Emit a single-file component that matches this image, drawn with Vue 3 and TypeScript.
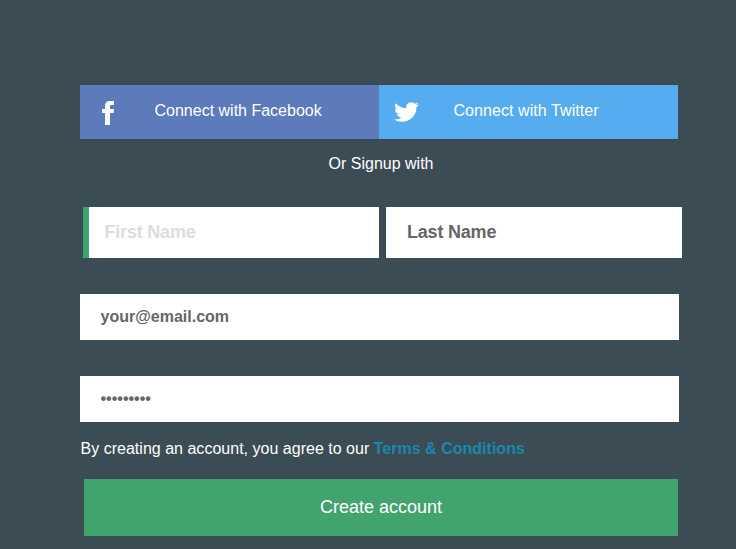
<script setup lang="ts">
import { reactive } from 'vue'

interface SignupForm {
  firstName: string
  lastName: string
  email: string
  password: string
}

const form = reactive<SignupForm>({
  firstName: '',
  lastName: '',
  email: '',
  password: '',
})
</script>

<template>
  <main class="signup">
    <div class="social">
      <button class="social-button facebook" type="button">
        <svg class="facebook-icon" viewBox="0 0 12 24" aria-hidden="true">
          <path d="M3 24V12H0V8h3V5C3 1.600 4.700 0 7.800 0H12v4H9.500C8.300 4 8 4.500 8 5.500V8h4l-.4 4H8v12z" />
        </svg>
        <span>Connect with Facebook</span>
      </button>
      <button class="social-button twitter" type="button">
        <svg class="twitter-icon" viewBox="0 2 24 20" preserveAspectRatio="none" aria-hidden="true">
          <path d="M23.953 4.570a10 10 0 0 1-2.825.775 4.958 4.958 0 0 0 2.163-2.723c-.951.555-2.005.959-3.127 1.184a4.920 4.920 0 0 0-8.384 4.482C7.690 8.095 4.067 6.130 1.640 3.162a4.822 4.822 0 0 0-.666 2.475c0 1.710.870 3.213 2.188 4.096a4.904 4.904 0 0 1-2.228-.616v.060a4.923 4.923 0 0 0 3.946 4.827 4.996 4.996 0 0 1-2.212.085 4.936 4.936 0 0 0 4.604 3.417 9.867 9.867 0 0 1-6.102 2.105c-.390 0-.779-.023-1.170-.067a13.995 13.995 0 0 0 7.557 2.209c9.053 0 13.998-7.496 13.998-13.985 0-.210 0-.420-.015-.630a9.935 9.935 0 0 0 2.460-2.548z" />
        </svg>
        <span>Connect with Twitter</span>
      </button>
    </div>

    <p class="divider">Or Signup with</p>

    <form @submit.prevent>
      <div class="names">
        <input v-model="form.firstName" class="field name active" type="text" placeholder="First Name" />
        <input v-model="form.lastName" class="field name" type="text" placeholder="Last Name" />
      </div>
      <input v-model="form.email" class="field wide" type="text" placeholder="your@email.com" />
      <input v-model="form.password" class="field wide" type="password" placeholder="•••••••••" />
      <p class="terms">By creating an account, you agree to our <a href="#">Terms &amp; Conditions</a></p>
      <button class="submit" type="submit">Create account</button>
    </form>
  </main>
</template>

<style>
body {
  background: #3c4c54;
}
</style>

<style scoped>
.signup {
  box-sizing: border-box;
  height: 549px;
  padding: 85px 54px 0 80px;
  overflow: hidden;
  font: 16px/20px "Liberation Sans", Arial, sans-serif;
  color: #fff;
}

button,
input {
  box-sizing: border-box;
  margin: 0;
  border: 0;
  border-radius: 0;
  font-family: inherit;
}

.social {
  display: flex;
  width: 598px;
}

.social-button {
  display: flex;
  align-items: flex-start;
  width: 299px;
  height: 54px;
  padding: 16px 0 0;
  font-size: 16px;
  line-height: 20px;
  color: #fff;
}

.facebook {
  background: #5d7aba;
}

.twitter {
  background: #55acee;
  letter-spacing: 0.07px;
}

.social-button svg {
  flex: none;
  fill: #fff;
}

.facebook-icon {
  width: 12px;
  height: 24px;
  margin: 0 40.5px 0 22px;
}

.twitter-icon {
  width: 25px;
  height: 20px;
  margin: 1px 34.5px 0 15px;
}

.divider {
  width: 602px;
  margin: 15px 0 33px;
  text-align: center;
}

form {
  display: flex;
  flex-direction: column;
  align-items: flex-start;
}

.names {
  display: flex;
  gap: 7px;
  margin: 0 0 36px 3px;
}

.field {
  padding: 0 20px;
  background: #fff;
  font-weight: bold;
  color: #666;
  outline: none;
}

.field::placeholder {
  color: #666;
  opacity: 1;
}

.name {
  width: 296px;
  height: 51px;
  padding: 0 21px;
  font-size: 18px;
  letter-spacing: -0.2px;
}

.active {
  padding-left: 15.5px;
  border-left: 6px solid #41a46f;
}

.active::placeholder {
  color: #ddd;
}

.wide {
  width: 599px;
  height: 46px;
  margin-bottom: 36px;
  padding-left: 20.5px;
  font-size: 16px;
}

.terms {
  margin: -19px 0 20px;
  padding-left: 0.5px;
  letter-spacing: 0.015px;
}

.terms a {
  font-weight: bold;
  color: #1b87ab;
  text-decoration: none;
}

.submit {
  width: 594px;
  height: 57px;
  margin-left: 4px;
  padding: 0;
  background: #41a46f;
  font-size: 18px;
  color: #fff;
}
</style>
